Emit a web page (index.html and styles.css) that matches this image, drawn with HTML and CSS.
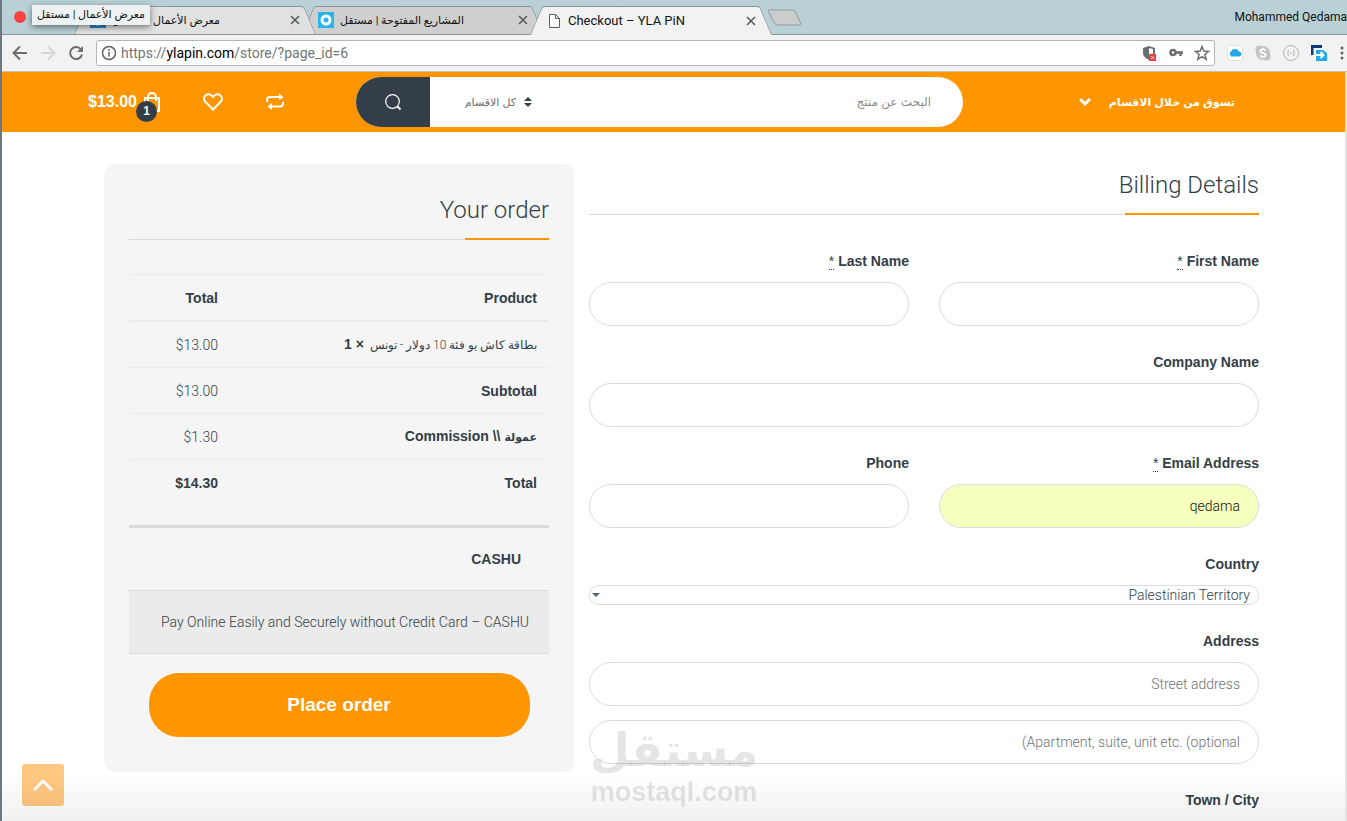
FILE: index.html
```html
<!DOCTYPE html>
<html lang="en">

<head>
    <meta charset="UTF-8">
    <meta name="viewport" content="width=device-width, initial-scale=1.0">
    <title>Checkout – YLA PiN</title>
    <link rel="stylesheet" href="styles.css">
</head>

<body>
    <div class="window">
        <div class="titlebar">
            <span class="window-close"></span>
            <div class="tabs">
                <div class="tab tab-front">
                    <svg class="favicon" width="16" height="16" viewBox="0 0 16 16"><rect width="16" height="16" fill="#2386c8"/><circle cx="8" cy="8" r="4" fill="none" stroke="#fff" stroke-width="3"/></svg>
                    <span class="tab-title" dir="rtl">معرض الأعمال | مستقل</span>
                    <button class="tab-close" aria-label="Close tab"><svg width="10" height="10" viewBox="0 0 10 10"><path d="M1 1l8 8M9 1l-8 8"/></svg></button>
                </div>
                <div class="tab tab-back">
                    <svg class="favicon" width="16" height="16" viewBox="0 0 16 16"><rect width="16" height="16" fill="#27b5ea"/><circle cx="8" cy="8" r="4" fill="none" stroke="#fff" stroke-width="3"/></svg>
                    <span class="tab-title" dir="rtl">المشاريع المفتوحة | مستقل</span>
                    <button class="tab-close" aria-label="Close tab"><svg width="10" height="10" viewBox="0 0 10 10"><path d="M1 1l8 8M9 1l-8 8"/></svg></button>
                </div>
                <div class="tab tab-active">
                    <svg class="favicon" width="16" height="16" viewBox="0 0 16 16"><path d="M3.500 1.500h6l4 4v9h-10zM9.500 1.500v4h4" fill="#fff" stroke="#55606a"/></svg>
                    <span class="tab-title">Checkout – YLA PiN</span>
                    <button class="tab-close" aria-label="Close tab"><svg width="10" height="10" viewBox="0 0 10 10"><path d="M1 1l8 8M9 1l-8 8"/></svg></button>
                </div>
            </div>
            <button class="new-tab" aria-label="New tab">
                <svg width="34" height="17" viewBox="0 0 34 17"><path d="M1.500 1h23q2 0 3 2l5 11q1 2-1 2h-22q-2 0-3-2l-6-11q-1-2 1-2z" fill="#cbcccc" stroke="#909b9e"/></svg>
            </button>
            <span class="profile">Mohammed Qedama</span>
            <div class="tab-tooltip" dir="rtl">معرض الأعمال | مستقل</div>
        </div>

        <div class="toolbar">
            <button aria-label="Back"><svg width="16" height="16" viewBox="0 0 16 16" fill="none" stroke="#6b6f70" stroke-width="2"><path d="M15 8H2M8 1.500L1.500 8 8 14.500"/></svg></button>
            <button aria-label="Forward"><svg width="16" height="16" viewBox="0 0 16 16" fill="none" stroke="#d6d6d6" stroke-width="2"><path d="M1 8h13M8 1.500L14.500 8 8 14.500"/></svg></button>
            <button aria-label="Reload"><svg width="16" height="16" viewBox="0 0 16 16" fill="none" stroke="#6b6f70" stroke-width="2"><path d="M13 4.500A6 6 0 1 0 14 9.500"/><path d="M15 1v6H9z" fill="#6b6f70" stroke="none"/></svg></button>
            <div class="address-bar">
                <svg width="16" height="16" viewBox="0 0 16 16" fill="none" stroke="#606466" stroke-width="1.500"><circle cx="8" cy="8" r="6.500"/><path d="M8 7v4.500M8 4v1.800"/></svg>
                <span class="url">https://<b>ylapin.com</b>/store/?page_id=6</span>
                <svg width="16" height="16" viewBox="0 0 16 16"><path d="M7 1l6 2v5q0 4-6 7Q1 12 1 8V3z" fill="#696d6f"/><path d="M7 3l4 1v4q0 3-4 5z" fill="#fff"/><rect x="7" y="9" width="7" height="7" fill="#f0403a"/><path d="M9 11l3 3M12 11l-3 3" stroke="#fff"/></svg>
                <svg width="16" height="16" viewBox="0 0 16 16" fill="none" stroke="#6b6f70"><circle cx="5" cy="7.500" r="2.500" stroke-width="2.500"/><path d="M8 7.500h7M12.500 7v4" stroke-width="2.500"/></svg>
                <svg width="16" height="16" viewBox="0 0 16 16" fill="none" stroke="#6b6f70" stroke-width="1.500"><path d="M8 1.500l1.800 4.600 4.900.3-3.800 3.100 1.300 4.800L8 11.600l-4.200 2.700 1.300-4.800L1.300 6.400l4.900-.3z"/></svg>
            </div>
            <div class="extensions">
                <button aria-label="Cloud"><svg width="16" height="16" viewBox="0 0 16 16"><rect x=".5" y=".5" width="15" height="15" rx="2" fill="#fff" stroke="#e2e2e2"/><path d="M4 11a2.500 2.500 0 0 1 0-4.500 4.500 4.500 0 0 1 8 0 2.500 2.500 0 0 1 0 5H4z" fill="#22a9e6"/></svg></button>
                <button aria-label="Skype"><svg width="16" height="16" viewBox="0 0 16 16"><circle cx="8" cy="8" r="7" fill="#c3c3c3"/><circle cx="4.500" cy="4.500" r="4" fill="#c3c3c3"/><circle cx="11.500" cy="11.500" r="4" fill="#c3c3c3"/><path d="M10.800 5.500Q8 3 6 5t2 3 2 3-5-.5" fill="none" stroke="#fff" stroke-width="1.800"/></svg></button>
                <button aria-label="Viewer"><svg width="16" height="16" viewBox="0 0 16 16" fill="none" stroke="#b3b3b3"><circle cx="8" cy="8" r="7.500"/><path d="M5.500 5Q4 8 5.500 11M10.500 5Q12 8 10.500 11M7 8h2"/></svg></button>
                <button aria-label="Send"><svg width="16" height="16" viewBox="0 0 16 16"><path d="M1 10V1.500h10" fill="none" stroke="#0d3c78" stroke-width="3"/><path d="M5 5h7l4 3v8H5z" fill="#22a9e6"/><path d="M5 10h7M9.500 7l3 3-3 3" fill="none" stroke="#fff" stroke-width="2"/></svg></button>
                <button aria-label="Menu"><svg width="16" height="16" viewBox="0 0 16 16" fill="#5f6364"><circle cx="8" cy="3" r="1.500"/><circle cx="8" cy="8" r="1.500"/><circle cx="8" cy="13" r="1.500"/></svg></button>
            </div>
        </div>

        <div class="page" dir="rtl">
            <header class="site-header">
                <div class="header-inner">
                    <a class="departments" href="#">
                        <span>تسوق من خلال الاقسام</span>
                        <svg width="12" height="8" viewBox="0 0 12 8" fill="none" stroke="#fff" stroke-width="3"><path d="M1 1l5 5 5-5"/></svg>
                    </a>
                    <form class="search">
                        <input class="search-input" type="text" placeholder="البحث عن منتج" aria-label="البحث عن منتج">
                        <svg width="8" height="10" viewBox="0 0 8 10" fill="#333e48"><path d="M0 4l4-4 4 4zM0 6h8l-4 4z"/></svg>
                        <select class="search-category" aria-label="كل الاقسام">
                            <option>كل الاقسام</option>
                        </select>
                        <button class="search-button" type="button" aria-label="Search">
                            <svg width="17" height="17" viewBox="0 0 17 17" fill="none" stroke="#fff"><circle cx="7.500" cy="7.500" r="6.800" stroke-width="1.200"/><path d="M12.500 12.500l3 3" stroke-width="2"/></svg>
                        </button>
                    </form>
                    <nav class="header-actions" dir="ltr">
                        <a class="cart" href="#">
                            <span>$13.00</span>
                            <svg width="18" height="20" viewBox="0 0 18 20" fill="none" stroke="#fff" stroke-width="2"><path d="M2 6h14v13H2zM5 9V5a4 4 0 0 1 8 0v4"/></svg>
                            <span class="cart-count">1</span>
                        </a>
                        <a href="#" aria-label="Wishlist"><svg width="20" height="18" viewBox="0 0 20 18" fill="none" stroke="#fff" stroke-width="2"><path d="M10 16.500L2.500 9A4.500 4.500 0 0 1 2.300 2.600 4.500 4.500 0 0 1 8.800 2.600L10 4l1.200-1.400a4.500 4.500 0 0 1 6.500 0A4.500 4.500 0 0 1 17.500 9z"/></svg></a>
                        <a href="#" aria-label="Compare"><svg width="20" height="18" viewBox="0 0 20 18" fill="none" stroke="#fff" stroke-width="2"><path d="M2 9V7q0-3 3-3h10M18 9v1.500q0 3-3 3H6"/><path d="M14 .5L18.500 4 14 7.500zM7 10L2.500 13.500 7 17z" fill="#fff" stroke="none"/></svg></a>
                    </nav>
                </div>
            </header>

            <main class="checkout">
                <form class="billing">
                    <h3 class="section-title title-billing">Billing Details</h3>
                    <div class="field-row">
                        <div class="field">
                            <label for="first-name">First Name <abbr title="required">*</abbr></label>
                            <input id="first-name" type="text">
                        </div>
                        <div class="field">
                            <label for="last-name">Last Name <abbr title="required">*</abbr></label>
                            <input id="last-name" type="text">
                        </div>
                    </div>
                    <div class="field">
                        <label for="company">Company Name</label>
                        <input id="company" type="text">
                    </div>
                    <div class="field-row">
                        <div class="field">
                            <label for="email">Email Address <abbr title="required">*</abbr></label>
                            <input id="email" class="autofilled" type="text" value="qedama">
                        </div>
                        <div class="field">
                            <label for="phone">Phone</label>
                            <input id="phone" type="text">
                        </div>
                    </div>
                    <div class="field">
                        <label for="country">Country</label>
                        <div class="select-box">
                            <select id="country">
                                <option>Palestinian Territory</option>
                            </select>
                            <svg class="select-arrow" width="8" height="4" viewBox="0 0 8 4" fill="#56616b"><path d="M0 0h8L4 4z"/></svg>
                        </div>
                    </div>
                    <div class="field">
                        <label for="address">Address</label>
                        <input id="address" type="text" placeholder="Street address">
                        <input type="text" dir="ltr" placeholder="(Apartment, suite, unit etc. (optional" aria-label="Apartment">
                    </div>
                    <div class="field field-city">
                        <label>Town / City</label>
                    </div>
                </form>

                <section class="order">
                    <h3 class="section-title">Your order</h3>
                    <table class="order-table">
                        <thead>
                            <tr>
                                <th>Product</th>
                                <th class="amount">Total</th>
                            </tr>
                        </thead>
                        <tbody>
                            <tr>
                                <td class="product">بطاقة كاش يو فئة 10 دولار - تونس&nbsp; <strong>× 1</strong></td>
                                <td class="amount">$13.00</td>
                            </tr>
                            <tr>
                                <th>Subtotal</th>
                                <td class="amount">$13.00</td>
                            </tr>
                            <tr>
                                <th><span class="fee-ar">عمولة</span> \\ Commission</th>
                                <td class="amount">$1.30</td>
                            </tr>
                            <tr>
                                <th>Total</th>
                                <th class="amount">$14.30</th>
                            </tr>
                        </tbody>
                    </table>
                    <div class="payment">
                        <h4 class="payment-name">CASHU</h4>
                        <p class="payment-info">Pay Online Easily and Securely without Credit Card – CASHU</p>
                        <button class="place-order" type="button">Place order</button>
                    </div>
                </section>
            </main>
        </div>
    </div>

    <button class="scroll-top" aria-label="Back to top">
        <svg width="20" height="12" viewBox="0 0 20 12" fill="none" stroke="#fff" stroke-width="3"><path d="M1 11l9-9 9 9"/></svg>
    </button>
    <div class="bottom-shade"></div>
    <div class="watermark">
        <span class="watermark-ar" lang="ar">مستقل</span>
        <span class="watermark-en">mostaql.com</span>
    </div>
</body>

</html>
```
FILE: styles.css
```css
* {
    box-sizing: border-box;
}

body {
    margin: 0;
    background-color: #fff;
    color: #333e48;
    font-family: "Liberation Sans", "DejaVu Sans", sans-serif;
    font-size: 14px;
}

button {
    border: none;
    background: none;
    padding: 0;
    cursor: pointer;
}

svg {
    display: block;
    flex: none;
}

a {
    color: inherit;
    text-decoration: none;
}

.window {
    min-height: 100vh;
    border-left: 2px solid #6f7880;
    border-right: 2px solid #e4e4e4;
}

/* Browser title bar */
.titlebar {
    position: relative;
    display: flex;
    align-items: center;
    height: 35px;
    margin-right: -2px;
    padding-left: 12px;
    background-color: #b9d0d6;
    border-bottom: 1px solid #87969a;
    font-family: Roboto, "DejaVu Sans", sans-serif;
    font-size: 13px;
    color: #111;
    white-space: nowrap;
}

.window-close {
    width: 12px;
    height: 12px;
    border-radius: 50%;
    background-color: #fc4340;
}

.tabs {
    display: flex;
    align-self: flex-end;
    margin-left: 48px;
}

.tab {
    position: relative;
    z-index: 1;
    display: flex;
    align-items: center;
    width: 242px;
    height: 28px;
    margin-right: -14px;
    padding: 0 16px;
}

/* Each half of the tab is slanted outwards */
.tab::before,
.tab::after {
    content: "";
    position: absolute;
    z-index: -1;
    top: 0;
    bottom: 0;
    background-color: #e0e1e1;
    border-top: 1px solid #87969a;
}

.tab::before {
    left: 6px;
    right: 50%;
    border-left: 1px solid #87969a;
    border-top-left-radius: 3px;
    transform: skewX(-23deg);
}

.tab::after {
    left: 40%;
    right: 6px;
    border-right: 1px solid #87969a;
    border-top-right-radius: 3px;
    transform: skewX(23deg);
}

.tab-front {
    z-index: 2;
}

.tab-back::before,
.tab-back::after {
    background-color: #cfcfcf;
}

.tab-active {
    z-index: 3;
    height: 29px;
    margin-bottom: -1px;
}

.tab-active::before,
.tab-active::after {
    background-color: #f2f2f2;
}

.tab-title {
    flex: 1;
    margin-left: 6px;
    text-align: left;
}

.tab-title[dir="rtl"],
.tab-tooltip {
    font-size: 11px;
}

.tab-close {
    stroke: #555;
    stroke-width: 1.5;
}

.new-tab {
    margin-left: 10px;
}

.profile {
    margin-left: auto;
    font-size: 12px;
}

.tab-tooltip {
    position: absolute;
    z-index: 4;
    top: 5px;
    left: 30px;
    padding: 0 5px;
    line-height: 20px;
    background-color: #eef1f1;
    box-shadow: 0 2px 6px rgba(0, 0, 0, 0.5);
}

/* Browser toolbar */
.toolbar {
    display: flex;
    align-items: center;
    gap: 12px;
    height: 37px;
    margin-right: -2px;
    padding-left: 10px;
    background-color: #f2f2f2;
    border-bottom: 1px solid #c5c0b8;
}

.address-bar {
    flex: 1;
    display: flex;
    align-items: center;
    gap: 10px;
    height: 26px;
    padding: 0 4px;
    background-color: #fff;
    border: 1px solid #b5b5b5;
    border-radius: 3px;
}

.url {
    flex: 1;
    margin-left: -6px;
    font-family: Roboto, sans-serif;
    font-size: 14px;
    color: #707776;
}

.url b {
    font-weight: normal;
    color: #000;
}

.extensions {
    display: flex;
    gap: 12px;
    margin-right: -3px;
}

.extensions button:last-child {
    margin-left: -5px;
}

.page {
    line-height: 22px;
}

/* Store header */
.site-header {
    background-color: #ff9600;
    color: #fff;
}

.header-inner {
    display: flex;
    align-items: center;
    max-width: 1171px;
    height: 60px;
    margin: 0 auto;
}

.departments {
    display: flex;
    align-items: center;
    gap: 18px;
    width: 296px;
    padding-right: 24px;
    font-size: 11px;
    font-weight: bold;
}

.search {
    flex: 1;
    display: flex;
    align-items: center;
    height: 50px;
    background-color: #fff;
    border-radius: 25px;
    overflow: hidden;
}

.search-input,
.search-category {
    border: none;
    outline: none;
    background: none;
    font-family: inherit;
}

.search-input {
    flex: 1;
    min-width: 0;
    padding: 0 32px;
    font-size: 12px;
}

.search-input::placeholder {
    color: #8a8a8a;
}

.search-category {
    appearance: none;
    padding: 0 8px 0 34px;
    color: #6b6f73;
    font-size: 11px;
}

.search-button {
    display: flex;
    align-items: center;
    justify-content: center;
    width: 74px;
    height: 50px;
    background-color: #333e48;
}

.header-actions {
    display: flex;
    align-items: center;
    gap: 42px;
    width: 268px;
}

.cart {
    position: relative;
    display: flex;
    align-items: center;
    gap: 6px;
    font-size: 16px;
    font-weight: bold;
}

.cart-count {
    position: absolute;
    top: 10px;
    left: 48px;
    width: 21px;
    height: 21px;
    border-radius: 50%;
    background-color: #333e48;
    font-size: 12px;
    line-height: 21px;
    text-align: center;
}

.checkout {
    display: grid;
    grid-template-columns: 670fr 470fr;
    align-items: start;
    gap: 15px;
    box-sizing: content-box;
    max-width: 1155px;
    margin: 0 auto;
    padding: 32px 0 0 16px;
}

.billing {
    padding-top: 6px;
}

.order {
    padding: 31px 25px 35px;
    background-color: #f5f5f5;
    border-radius: 10px;
}

.section-title {
    position: relative;
    margin: 0 0 34px;
    padding-bottom: 14px;
    border-bottom: 1px solid #dadada;
    font-family: Roboto, "Liberation Sans", sans-serif;
    font-size: 24px;
    font-weight: 300;
    line-height: 30px;
}

.section-title::after {
    content: "";
    position: absolute;
    right: 0;
    bottom: -1px;
    width: 20%;
    height: 2px;
    background-color: #ff9600;
}

.title-billing {
    margin-bottom: 35px;
}

.field-row {
    display: flex;
    gap: 30px;
}

.field {
    flex: 1;
    margin-bottom: 25px;
}

.field label {
    display: block;
    margin-bottom: 10px;
    font-weight: bold;
}

.field-city,
.field-city label {
    margin-bottom: 0;
}

.field abbr {
    font-weight: normal;
    text-decoration: none;
    border-bottom: 1px dotted #333e48;
}

.field input,
.select-box select {
    display: block;
    width: 100%;
    height: 44px;
    padding: 0 18px;
    border: 1px solid #dcdcdc;
    border-radius: 22px;
    background-color: #fff;
    color: #111;
    font-family: Roboto, "Liberation Sans", sans-serif;
    font-size: 14px;
    font-weight: 300;
    text-align: right;
}

.field input + input {
    margin-top: 14px;
}

.field input::placeholder {
    color: #6f7378;
}

.field .autofilled {
    background-color: #f6ffbd;
}

.select-box {
    position: relative;
}

.select-box select {
    appearance: none;
    height: 20px;
    padding: 0 8px;
    border-radius: 10px;
    color: #333e48;
}

.select-arrow {
    position: absolute;
    top: 8px;
    left: 3px;
}

/* Order summary */
.order-table {
    width: 100%;
    border-spacing: 0;
    border-bottom: 3px solid #dadada;
    padding-bottom: 20px;
}

.order-table th,
.order-table td {
    height: 46px;
    padding: 0 12px;
    border-top: 1px solid #ebebeb;
    text-align: right;
}

.order-table thead th {
    height: 47px;
    border-bottom: 1px solid #ebebeb;
}

.order-table td {
    font-family: Roboto, "DejaVu Sans", sans-serif;
    font-weight: 300;
}

.order-table .product {
    font-size: 12px;
}

.order-table strong {
    font-family: "Liberation Sans", sans-serif;
    font-size: 14px;
    font-weight: bold;
}

.fee-ar {
    font-size: 11px;
}

.order-table .amount {
    width: 101px;
}

.payment-name {
    margin: 20px 28px;
    font-size: 14px;
}

.payment-info {
    margin: 0 0 19px;
    padding: 20px;
    background-color: #ebebeb;
    border-top: 1px dotted #d0d0d0;
    border-bottom: 1px dotted #d0d0d0;
    font-family: Roboto, "Liberation Sans", sans-serif;
    font-weight: 300;
}

.place-order {
    display: block;
    width: calc(100% - 39px);
    height: 64px;
    margin: 0 auto;
    border-radius: 30px;
    background-color: #ff9600;
    color: #fff;
    font-family: inherit;
    font-size: 19px;
    font-weight: bold;
}

/* Things floating over the page */
.scroll-top {
    position: fixed;
    left: 22px;
    bottom: 15px;
    display: flex;
    align-items: center;
    justify-content: center;
    width: 42px;
    height: 42px;
    border-radius: 3px;
    background-color: #ffc880;
}

.bottom-shade {
    position: fixed;
    left: 2px;
    right: 2px;
    bottom: 0;
    height: 45px;
    background: linear-gradient(transparent, rgba(0, 0, 0, 0.06));
    pointer-events: none;
}

.watermark {
    position: fixed;
    left: 590px;
    bottom: 14px;
    display: flex;
    flex-direction: column;
    align-items: center;
    color: rgba(0, 0, 0, 0.1);
    font-weight: bold;
    pointer-events: none;
}

.watermark-ar {
    font-family: "DejaVu Sans", sans-serif;
    font-size: 46px;
    line-height: 54px;
}

.watermark-en {
    font-size: 27px;
    line-height: 30px;
}
```
